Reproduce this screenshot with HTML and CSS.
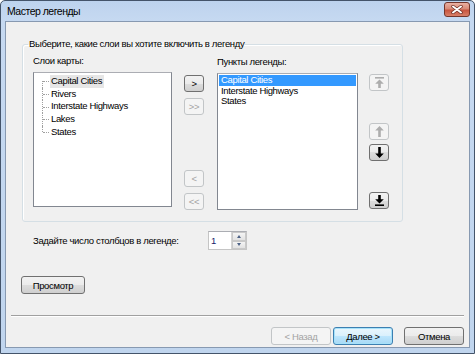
FILE: index.html
```html
<!DOCTYPE html>
<html lang="ru">
<head>
<meta charset="UTF-8">
<title>Мастер легенды</title>
<link rel="stylesheet" href="styles.css">
</head>
<body>
<div class="window">
  <div class="titlebar">
    <span class="title">Мастер легенды</span>
    <button class="close" aria-label="Закрыть">
      <svg width="12" height="9" viewBox="0 0 12 9"><path d="M2 1.5 L10 7.5 M10 1.5 L2 7.5" stroke="#6b2a20" stroke-width="3.4" stroke-linecap="round"/><path d="M2 1.5 L10 7.5 M10 1.5 L2 7.5" stroke="#fff" stroke-width="2" stroke-linecap="round"/></svg>
    </button>
  </div>
  <div class="client">
    <fieldset class="group">
      <legend>Выберите, какие слои вы хотите включить в легенду</legend>
      <div class="group-body">
        <div class="col">
          <div class="label">Слои карты:</div>
          <ul class="list tree">
            <li><span class="inactive-sel">Capital Cities</span></li>
            <li><span>Rivers</span></li>
            <li><span>Interstate Highways</span></li>
            <li><span>Lakes</span></li>
            <li><span>States</span></li>
          </ul>
        </div>
        <div class="mover">
          <div class="stack">
            <button class="btn tool">&gt;</button>
            <button class="btn tool" disabled>&gt;&gt;</button>
          </div>
          <div class="stack">
            <button class="btn tool" disabled>&lt;</button>
            <button class="btn tool" disabled>&lt;&lt;</button>
          </div>
        </div>
        <div class="col col-legend">
          <div class="label">Пункты легенды:</div>
          <ul class="list items">
            <li class="selected">Capital Cities</li>
            <li>Interstate Highways</li>
            <li>States</li>
          </ul>
        </div>
        <div class="order">
          <button class="btn tool" disabled aria-label="В начало">
            <svg width="9" height="11" viewBox="0 0 9 11"><rect x="0" y="0" width="9" height="1.6"/><path d="M4.5 2.4 L0.2 6.8 H3.2 V11 H5.8 V6.8 H8.8 Z"/></svg>
          </button>
          <div class="stack">
            <button class="btn tool" disabled aria-label="Вверх">
              <svg width="9" height="11" viewBox="0 0 9 11"><path d="M4.5 0 L0.2 4.6 H3.2 V11 H5.8 V4.6 H8.8 Z"/></svg>
            </button>
            <button class="btn tool" aria-label="Вниз">
              <svg width="9" height="11" viewBox="0 0 9 11"><path d="M4.5 11 L0.2 6.4 H3.2 V0 H5.8 V6.4 H8.8 Z"/></svg>
            </button>
          </div>
          <button class="btn tool" aria-label="В конец">
            <svg width="9" height="11" viewBox="0 0 9 11"><path d="M4.5 8.6 L0.2 4.2 H3.2 V0 H5.8 V4.2 H8.8 Z"/><rect x="0" y="9.4" width="9" height="1.6"/></svg>
          </button>
        </div>
      </div>
    </fieldset>

    <div class="columns-row">
      <span class="columns-label">Задайте число столбцов в легенде:</span>
      <div class="spin">
        <span class="spin-value">1</span>
        <div class="spin-arrows">
          <span class="spin-btn"><i class="tri-up"></i></span>
          <span class="spin-btn"><i class="tri-down"></i></span>
        </div>
      </div>
    </div>

    <div class="preview-row">
      <button class="btn preview">Просмотр</button>
    </div>

    <div class="separator"></div>

    <div class="footer">
      <button class="btn wide" disabled>&lt; Назад</button>
      <button class="btn wide default">Далее &gt;</button>
      <button class="btn wide cancel">Отмена</button>
    </div>
  </div>
</div>
</body>
</html>
```

FILE: styles.css
```css
body { margin: 0; font-family: "Liberation Sans", Arial, sans-serif; font-size: 9.5px; letter-spacing: -0.35px; color: #000; }
ul { list-style: none; margin: 0; padding: 0; }

.window { width: 475px; height: 354px; box-sizing: border-box; border: 1px solid #44546a; border-radius: 5px 5px 0 0; background: linear-gradient(#bdd3ee, #c6d9f1 20px, #c0d5ee); padding: 0 4px 5px; display: flex; flex-direction: column; }
.titlebar { height: 20px; display: flex; justify-content: space-between; padding-left: 2px; }
.title { font-size: 10.5px; letter-spacing: -0.5px; line-height: 21px; }
.close { width: 26px; height: 15px; margin-top: 1px; padding: 0; border: 1px solid #73362c; border-radius: 3px; background: linear-gradient(#eab0a2, #d88a77 45%, #c8553f 55%, #d87f68); display: flex; align-items: center; justify-content: center; }

.client { flex: 1; background: #f0f0f0; border: 1px solid #8799b1; display: flex; flex-direction: column; }

.group { width: 381px; box-sizing: border-box; margin: 16px 0 0 16px; padding: 0 13px 11px 10px; border: 1px solid #d5dfe5; border-radius: 3px; box-shadow: inset 1px 1px 0 #fff; }
.group legend { margin-left: -5px; padding: 0 1px; line-height: 12px; }
.group-body { display: flex; padding-top: 5px; }

.label { line-height: 12px; margin-bottom: 5px; }
.col { display: flex; flex-direction: column; }
.col-legend { margin-left: 13px; padding-top: 1px; }

.list { background: #fff; border: 1px solid #828790; border-top-color: #abadb3; box-sizing: border-box; }
.tree { width: 139px; height: 135px; padding-top: 2px; }
.tree li { position: relative; padding-left: 16px; line-height: 12.7px; height: 12.7px; }
.tree li span { display: inline-block; padding: 0 2px 0 1px; }
.tree li::before { content: ''; position: absolute; left: 8px; top: 0; bottom: 0; border-left: 1px dotted #a0a0a0; }
.tree li:first-child::before { top: 50%; }
.tree li:last-child::before { bottom: 50%; }
.tree li::after { content: ''; position: absolute; left: 9px; top: 50%; width: 6px; border-top: 1px dotted #a0a0a0; }
.inactive-sel { background: #e6e6e6; }

.items { width: 141px; height: 137px; padding: 1px; }
.items li { line-height: 10.5px; padding-left: 2px; }
.items li.selected { background: #3399ff; color: #fff; }

.btn { font: inherit; letter-spacing: inherit; color: #000; padding: 0; border: 1px solid #707070; border-radius: 3px; background: linear-gradient(#f2f2f2, #ebebeb 50%, #dddddd 50%, #cfcfcf); display: flex; align-items: center; justify-content: center; }
.btn:disabled { color: #a3a3a3; border-color: #c2c5c7; background: #f4f4f4; }
.btn svg { fill: #000; }
.btn:disabled svg { fill: #adadad; }
.tool { width: 20px; height: 17px; }

.mover { margin-left: 12px; padding-top: 20px; display: flex; flex-direction: column; justify-content: space-between; }
.stack { display: flex; flex-direction: column; gap: 6px; }
.order { margin-left: 11px; padding: 19px 0 1px; display: flex; flex-direction: column; justify-content: space-between; }
.order .stack { gap: 4px; }

.columns-row { display: flex; align-items: center; margin: 9px 0 0 27px; }
.columns-label { width: 175px; }
.spin { width: 39px; height: 19px; box-sizing: border-box; display: flex; background: #fff; border: 1px solid #c5c5c5; border-top-color: #abadb3; }
.spin-value { flex: 1; padding-left: 2px; line-height: 17px; color: #1a1a6a; }
.spin-arrows { width: 14px; display: flex; flex-direction: column; border-left: 1px solid #d5d5d5; }
.spin-btn { flex: 1; display: flex; align-items: center; justify-content: center; background: linear-gradient(#f4f4f4, #e2e2e2); border: 1px solid #c9c9c9; }
.tri-up, .tri-down { width: 0; height: 0; border-left: 2.5px solid transparent; border-right: 2.5px solid transparent; }
.tri-up { border-bottom: 3px solid #4d6185; }
.tri-down { border-top: 3px solid #4d6185; }

.preview-row { margin: 26px 0 0 15px; }
.preview { width: 64px; height: 18px; }

.separator { margin: 21px 5px 0 5px; border-top: 1px solid #a0a0a0; border-bottom: 1px solid #fff; }

.footer { display: flex; justify-content: flex-end; gap: 2px; margin: 10px 5px 0 0; }
.wide { width: 60px; height: 18px; }
.default { border-color: #3c7fb1; background: linear-gradient(#eaf6fd, #d9f0fc 50%, #bee6fd 50%, #a7d9f5); box-shadow: inset 0 0 0 1px #a6e2fa; }
.cancel { margin-left: 9px; }
```
